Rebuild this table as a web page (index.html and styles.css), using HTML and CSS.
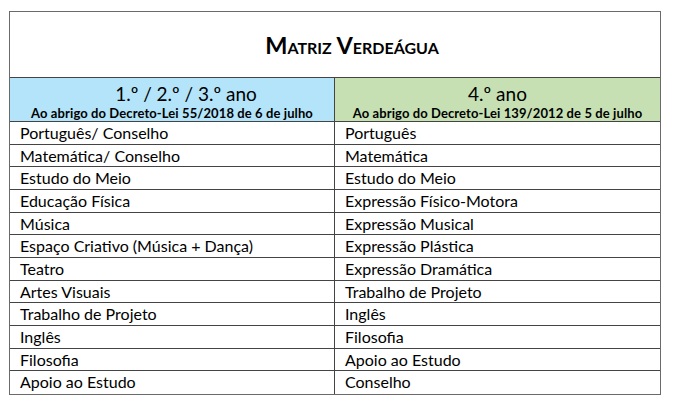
FILE: index.html
```html
<!DOCTYPE html>
<html lang="pt">
<head>
<meta charset="utf-8">
<title>Matriz Verdeágua</title>
<link rel="stylesheet" href="styles.css">
</head>
<body>
<div class="sheet">
  <div class="title">Matriz Verdeágua</div>
  <div class="head blue">
    <div class="year shifted">1.º / 2.º / 3.º ano</div>
    <div class="law">Ao abrigo do Decreto-Lei 55/2018 de 6 de julho</div>
  </div>
  <div class="head green">
    <div class="year">4.º ano</div>
    <div class="law">Ao abrigo do Decreto-Lei 139/2012 de 5 de julho</div>
  </div>
  <div class="cell left">Português/ Conselho</div><div class="cell">Português</div>
  <div class="cell left">Matemática/ Conselho</div><div class="cell">Matemática</div>
  <div class="cell left">Estudo do Meio</div><div class="cell">Estudo do Meio</div>
  <div class="cell left">Educação Física</div><div class="cell">Expressão Físico-Motora</div>
  <div class="cell left">Música</div><div class="cell">Expressão Musical</div>
  <div class="cell left">Espaço Criativo (Música + Dança)</div><div class="cell">Expressão Plástica</div>
  <div class="cell left">Teatro</div><div class="cell">Expressão Dramática</div>
  <div class="cell left">Artes Visuais</div><div class="cell">Trabalho de Projeto</div>
  <div class="cell left">Trabalho de Projeto</div><div class="cell">Inglês</div>
  <div class="cell left">Inglês</div><div class="cell">Filosofia</div>
  <div class="cell left">Filosofia</div><div class="cell">Apoio ao Estudo</div>
  <div class="cell left last">Apoio ao Estudo</div><div class="cell last">Conselho</div>
</div>
</body>
</html>
```
FILE: styles.css
```css
html, body {
  margin: 0;
  padding: 0;
  background: #ffffff;
}
body {
  padding: 11px 0 0 9px;
  font-family: Lato, "Open Sans", sans-serif;
  color: #000000;
}
.sheet {
  width: 652px;
  display: grid;
  grid-template-columns: 325px 325px;
  grid-template-rows: 66px 44px repeat(12, 22.67px);
  border: 1px solid #6a6a6a;
  box-sizing: border-box;
}
.title {
  grid-column: 1 / 3;
  display: flex;
  align-items: center;
  justify-content: center;
  font-variant: small-caps;
  font-weight: bold;
  font-size: 23.5px;
  padding: 1px 0 0 34px;
  border-bottom: 1px solid #444;
}
.head {
  display: flex;
  flex-direction: column;
  align-items: center;
  justify-content: center;
  padding-top: 3px;
  border-bottom: 1px solid #444;
}
.blue {
  background: #b4e4fa;
  border-right: 1px solid #444;
}
.green {
  background: #c6e0b4;
}
.year {
  font-size: 19px;
  line-height: 23px;
}
.shifted {
  padding-left: 28px;
}
.law {
  font-size: 13px;
  font-weight: bold;
  letter-spacing: 0.1px;
  line-height: 16px;
}
.cell {
  font-size: 16px;
  line-height: 21px;
  padding-left: 10px;
  border-bottom: 1px solid #444;
  box-sizing: border-box;
  white-space: nowrap;
}
.left {
  border-right: 1px solid #444;
}
.last {
  border-bottom: none;
}
```
